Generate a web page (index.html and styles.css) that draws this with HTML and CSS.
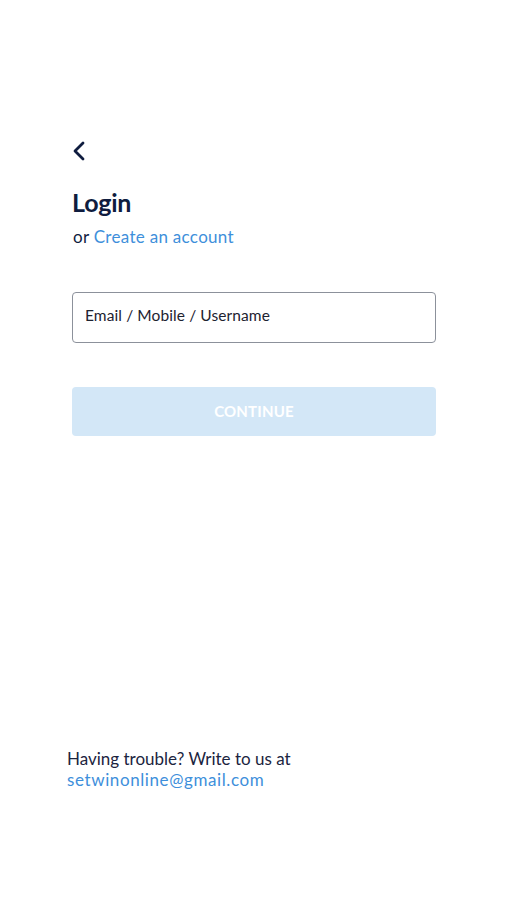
FILE: index.html
```html
<!DOCTYPE html>
<html>
<head>
<meta charset="utf-8">
<link rel="stylesheet" href="styles.css">
</head>
<body>
<div class="page">
  <main class="content">
    <button class="back" aria-label="Back">
      <svg width="14" height="20" viewBox="0 0 14 20"><path d="M11 2 L3 10 L11 18" fill="none" stroke="#0f1c3f" stroke-width="2.8" stroke-linecap="round" stroke-linejoin="round"/></svg>
    </button>
    <h1 class="title">Login</h1>
    <p class="sub">or <a class="link" href="#">Create an account</a></p>
    <div class="field">Email / Mobile / Username</div>
    <button class="continue">CONTINUE</button>
  </main>
  <footer class="help">
    <p>Having trouble? Write to us at</p>
    <a class="link mail" href="#">setwinonline@gmail.com</a>
  </footer>
</div>
</body>
</html>
```

FILE: styles.css
```css
html, body {
  margin: 0;
  padding: 0;
  background: #ffffff;
}
body {
  font-family: Lato, "Noto Sans", sans-serif;
  color: #0f1c3f;
}
.page {
  width: 507px;
  height: 900px;
  display: flex;
  flex-direction: column;
}
.content {
  padding: 141px 71px 0 72px;
  display: flex;
  flex-direction: column;
}
.back {
  border: 0;
  background: none;
  padding: 0;
  width: 16px;
  height: 20px;
  display: flex;
  align-items: center;
}
.title {
  margin: 26px 0 0 0;
  font-size: 25px;
  font-weight: 700;
  line-height: 30px;
  letter-spacing: -0.2px;
}
.sub {
  margin: 10px 0 0 1px;
  font-size: 17px;
  line-height: 20px;
  letter-spacing: 0.3px;
  color: #0f1c3f;
}
.link {
  color: #3e8fdb;
  text-decoration: none;
}
.field {
  margin-top: 45px;
  height: 51px;
  box-sizing: border-box;
  border: 1.5px solid #8c919b;
  border-radius: 4px;
  padding: 0 12px 5px 12px;
  display: flex;
  align-items: center;
  font-size: 15.5px;
  letter-spacing: 0.1px;
  color: #1d2230;
}
.continue {
  margin-top: 44px;
  height: 49px;
  border: 0;
  border-radius: 4px;
  background: #d3e7f7;
  color: #ffffff;
  font-family: Lato, "Noto Sans", sans-serif;
  font-weight: 700;
  font-size: 15px;
  letter-spacing: 0.2px;
  padding-bottom: 3px;
}
.help {
  margin-top: auto;
  padding: 0 0 110px 67px;
  font-size: 17px;
  line-height: 21px;
}
.help p {
  margin: 0;
  color: #1b2440;
}
.mail {
  letter-spacing: 0.6px;
}
```
